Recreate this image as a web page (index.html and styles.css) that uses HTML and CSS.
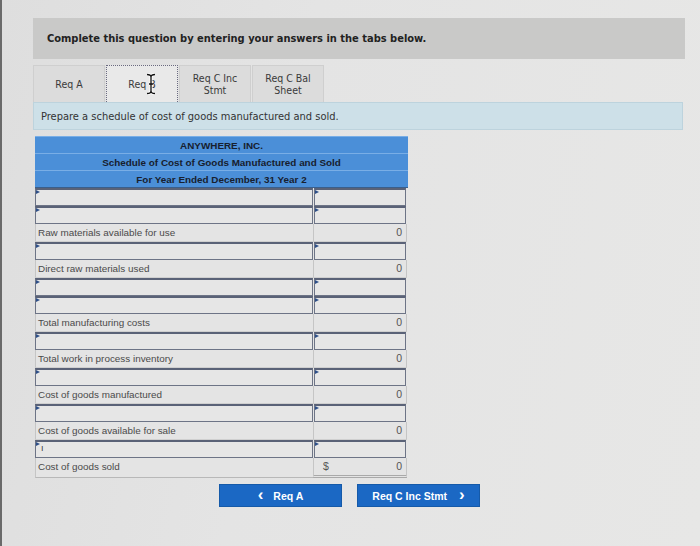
FILE: index.html
```html
<!DOCTYPE html>
<html>
<head>
<meta charset="utf-8">
<link rel="stylesheet" href="styles.css">
</head>
<body>
<div class="page">
  <div class="banner">Complete this question by entering your answers in the tabs below.</div>
  <div class="tabs">
    <div class="tab">Req A</div>
    <div class="tab active"><span>Req B</span>
      <svg class="ibeam" width="10" height="22" viewBox="0 0 10 22">
        <path d="M1 1.5 Q5 1.5 5 4 Q5 1.5 9 1.5 M5 4 V18 M1 20.5 Q5 20.5 5 18 Q5 20.5 9 20.5 M3 11 H7" fill="none" stroke="#fff" stroke-width="3"/>
        <path d="M1 1.5 Q5 1.5 5 4 Q5 1.5 9 1.5 M5 4 V18 M1 20.5 Q5 20.5 5 18 Q5 20.5 9 20.5 M3 11 H7" fill="none" stroke="#111" stroke-width="1.3"/>
      </svg>
    </div>
    <div class="tab">Req C Inc<br>Stmt</div>
    <div class="tab">Req C Bal<br>Sheet</div>
  </div>
  <div class="instr">Prepare a schedule of cost of goods manufactured and sold.</div>
  <div class="sched">
    <div class="hd">ANYWHERE, INC.</div>
    <div class="hd">Schedule of Cost of Goods Manufactured and Sold</div>
    <div class="hd last">For Year Ended December, 31 Year 2</div>
    <div class="row in"><div class="c"></div><div class="c"></div></div>
    <div class="row in"><div class="c"></div><div class="c"></div></div>
    <div class="row lb"><div class="c">Raw materials available for use</div><div class="c v">0</div></div>
    <div class="row in"><div class="c"></div><div class="c"></div></div>
    <div class="row lb"><div class="c">Direct raw materials used</div><div class="c v">0</div></div>
    <div class="row in"><div class="c"></div><div class="c"></div></div>
    <div class="row in"><div class="c"></div><div class="c"></div></div>
    <div class="row lb"><div class="c">Total manufacturing costs</div><div class="c v">0</div></div>
    <div class="row in"><div class="c"></div><div class="c"></div></div>
    <div class="row lb"><div class="c">Total work in process inventory</div><div class="c v">0</div></div>
    <div class="row in"><div class="c"></div><div class="c"></div></div>
    <div class="row lb"><div class="c">Cost of goods manufactured</div><div class="c v">0</div></div>
    <div class="row in"><div class="c"></div><div class="c"></div></div>
    <div class="row lb"><div class="c">Cost of goods available for sale</div><div class="c v">0</div></div>
    <div class="row in"><div class="c"><span class="caret">ı</span></div><div class="c"></div></div>
    <div class="row lb final"><div class="c">Cost of goods sold</div><div class="c v total"><span class="dol">$</span><span>0</span></div></div>
  </div>
  <div class="nav">
    <button class="btn"><span class="chev">&lsaquo;</span>Req A</button>
    <button class="btn">Req C Inc Stmt<span class="chev r">&rsaquo;</span></button>
  </div>
</div>
</body>
</html>
```

FILE: styles.css
```css
html, body {
  margin: 0;
  padding: 0;
}
body {
  width: 700px;
  height: 546px;
  overflow: hidden;
  background: linear-gradient(100deg, #dedede 0%, #e4e4e4 40%, #e7e7e6 100%);
  border-left: 2px solid #6a6a6a;
  box-sizing: border-box;
  font-family: "DejaVu Sans Condensed", "DejaVu Sans", sans-serif;
}
.page {
  padding: 18px 15px 0 31px;
}
.banner {
  height: 41px;
  background: #c9c9c8;
  display: flex;
  align-items: center;
  padding-left: 14px;
  font-weight: bold;
  font-size: 11px;
  color: #222;
}
.tabs {
  display: flex;
  margin-top: 6px;
  height: 37px;
}
.tab {
  width: 72px;
  box-sizing: border-box;
  background: #dcdcdc;
  border: 1px solid #cfcfcf;
  border-bottom: none;
  display: flex;
  align-items: center;
  justify-content: center;
  text-align: center;
  font-size: 10.5px;
  line-height: 12px;
  color: #3a3a3a;
  margin-right: 1px;
  position: relative;
}
.tab.active {
  background: #e9e9e9;
  border: 1px dotted #6a6a80;
  border-bottom: none;
}
.ibeam {
  position: absolute;
  left: 39px;
  top: 7px;
}
.instr {
  height: 28px;
  width: 650px;
  box-sizing: border-box;
  background: #cde0e8;
  border: 1px solid #bdd3dd;
  display: flex;
  align-items: center;
  padding-left: 7px;
  font-size: 11px;
  color: #333;
}
.sched {
  margin: 6px 0 0 2px;
  width: 373px;
  font-family: "Liberation Sans", Arial, sans-serif;
}
.hd {
  height: 17px;
  line-height: 17px;
  background: #4b8fd8;
  border-top: 1px solid #79aee6;
  text-align: center;
  font-weight: bold;
  font-size: 9.9px;
  color: #17202e;
  box-sizing: border-box;
}
.hd.last {
  height: 18px;
  border-bottom: 1px solid #3a5f8c;
}
.row {
  display: grid;
  grid-template-columns: 278px 95px;
  height: 18px;
}
.row .c {
  box-sizing: border-box;
  position: relative;
}
.row.in .c {
  background: #e6e6e6;
  border: 1px solid #6d7486;
  border-top: 2px solid #5a6277;
}
.row.in .c + .c {
  margin: 0 2px 0 1px;
}
.row.in .c::before {
  content: "";
  position: absolute;
  left: 0;
  top: 0;
  border-left: 4px solid #2e4f88;
  border-top: 2px solid transparent;
  border-bottom: 2px solid transparent;
}
.row.lb .c {
  background: #e4e4e4;
  border-left: 1px solid #c5c5c5;
  border-bottom: 1px solid #cfcfcf;
  font-size: 9.9px;
  color: #4a4a4a;
  line-height: 17px;
  padding-left: 2px;
}
.row.lb .c.v {
  text-align: right;
  padding-right: 4px;
  border-right: 1px solid #c5c5c5;
  margin-right: 1px;
  font-size: 10.5px;
  color: #555;
}
.row.final .c {
  border-bottom: 1px solid #b8b8b8;
}
.row.final .c.total {
  display: flex;
  justify-content: space-between;
  padding-left: 9px;
  border-bottom: 3px double #a9a9a9;
}
.caret {
  position: absolute;
  left: 5px;
  top: 0;
  font-size: 9px;
  color: #333;
  line-height: 12px;
}
.nav {
  display: flex;
  gap: 15px;
  padding-left: 186px;
  margin-top: 8px;
}
.btn {
  width: 123px;
  height: 23px;
  background: #1b68c4;
  border: 1px solid #155aa9;
  color: #fff;
  font-family: "Liberation Sans", Arial, sans-serif;
  font-weight: bold;
  font-size: 10.5px;
  padding: 0;
  display: flex;
  align-items: center;
  justify-content: center;
}
.chev {
  font-size: 17px;
  line-height: 12px;
  margin-right: 10px;
  position: relative;
  top: -1px;
}
.chev.r {
  margin-right: 0;
  margin-left: 12px;
}
```
